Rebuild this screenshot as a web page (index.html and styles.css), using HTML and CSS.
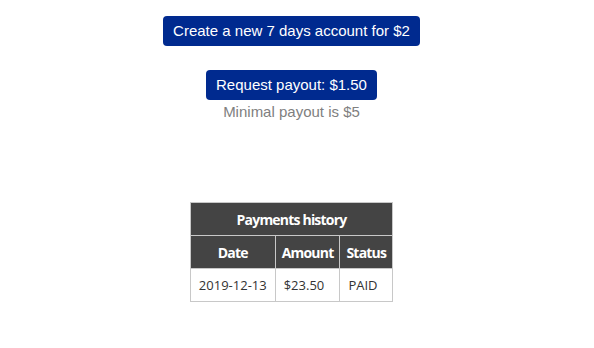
FILE: index.html
```html
<!DOCTYPE html>
<html>
<head>
<meta charset="utf-8">
<link rel="stylesheet" href="styles.css">
</head>
<body>
<div class="page">
  <div class="actions">
    <button class="btn btn-create">Create a new 7 days account for $2</button>
    <button class="btn btn-payout">Request payout: $1.50</button>
    <div class="note">Minimal payout is $5</div>
  </div>
  <table class="history">
    <thead>
      <tr><th colspan="3" class="title">Payments history</th></tr>
      <tr><th>Date</th><th>Amount</th><th>Status</th></tr>
    </thead>
    <tbody>
      <tr><td>2019-12-13</td><td>$23.50</td><td>PAID</td></tr>
    </tbody>
  </table>
</div>
</body>
</html>
```
FILE: styles.css
```css
html, body {
  margin: 0;
  padding: 0;
  background: #fff;
}
.page {
  width: 583px;
  display: flex;
  flex-direction: column;
  align-items: center;
  padding-top: 16px;
}
.actions {
  display: flex;
  flex-direction: column;
  align-items: center;
}
.btn {
  font-family: "Liberation Sans", Arial, sans-serif;
  font-size: 15px;
  color: #fff;
  background: #002a8f;
  border: none;
  border-radius: 4px;
  height: 30px;
  padding: 0 10px;
  line-height: 30px;
}
.btn-payout {
  margin-top: 24px;
}
.note {
  font-family: "Liberation Sans", Arial, sans-serif;
  font-size: 15px;
  color: #808080;
  margin-top: 3px;
  line-height: 17px;
}
.history {
  margin-top: 82px;
  border-collapse: collapse;
  font-family: "Open Sans", sans-serif;
  font-size: 13px;
}
.history th {
  background: #444;
  color: #fff;
  font-weight: 700;
  font-size: 14px;
  letter-spacing: -0.8px;
  height: 32px;
  padding: 0 6px;
  border: 1px solid #c8c8c8;
}
.history td {
  color: #333;
  height: 32px;
  padding: 0 8px;
  border: 1px solid #c8c8c8;
}
```
